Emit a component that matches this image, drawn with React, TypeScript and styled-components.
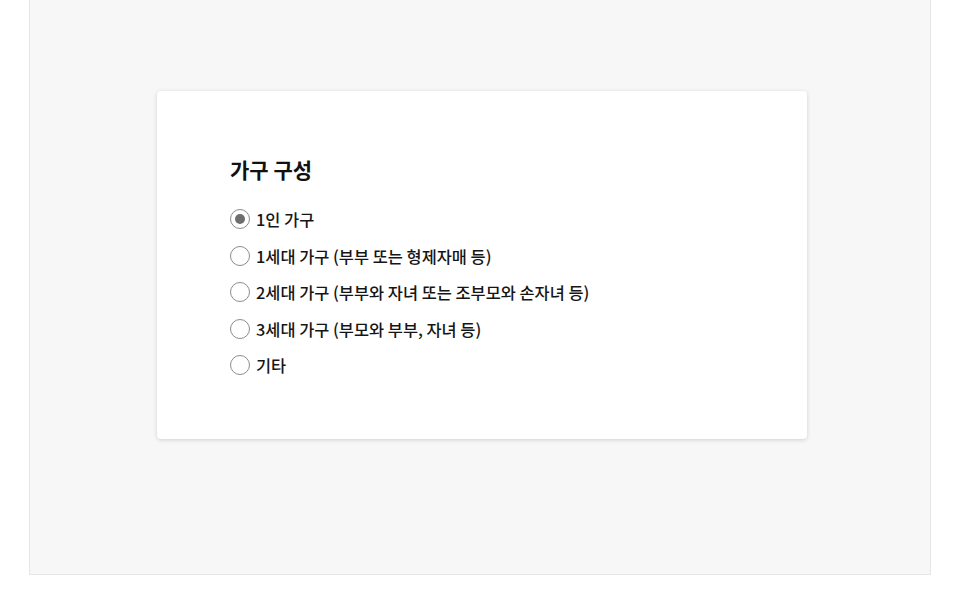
import React, { useState } from 'react';
import styled, { createGlobalStyle } from 'styled-components';

const GlobalStyle = createGlobalStyle`
  html, body {
    margin: 0;
    padding: 0;
    background: #ffffff;
  }
  body {
    font-family: "Noto Sans CJK KR", "Noto Sans", sans-serif;
    color: #111111;
  }
`;

const OPTIONS = [
  '1인 가구',
  '1세대 가구 (부부 또는 형제자매 등)',
  '2세대 가구 (부부와 자녀 또는 조부모와 손자녀 등)',
  '3세대 가구 (부모와 부부, 자녀 등)',
  '기타',
];

const Page = styled.div`
  padding: 0 33px 31px 29px;
`;

const Panel = styled.div`
  box-sizing: border-box;
  height: 575px;
  background: #f7f7f7;
  border: 1px solid #e6e6e6;
  border-top: none;
  padding: 91px 0 0 127px;
`;

const Card = styled.section`
  box-sizing: border-box;
  width: 650px;
  height: 348px;
  background: #ffffff;
  border-radius: 4px;
  box-shadow: 0 1px 4px rgba(0, 0, 0, 0.16);
  padding: 63px 73px 62px;
`;

const Title = styled.h2`
  margin: 0;
  font-size: 21px;
  line-height: 30px;
  font-weight: 700;
`;

const OptionList = styled.div`
  display: flex;
  flex-direction: column;
  gap: 12.5px;
  margin-top: 23px;
`;

const OptionRow = styled.label`
  display: flex;
  align-items: center;
  gap: 6px;
  height: 24px;
  font-size: 16.4px;
  line-height: 24px;
  font-weight: 500;
  color: #151515;
  cursor: pointer;
`;

const HiddenInput = styled.input`
  position: absolute;
  opacity: 0;
  width: 0;
  height: 0;
  margin: 0;
`;

const RadioMark = styled.span<{ $checked: boolean }>`
  box-sizing: border-box;
  width: 20px;
  height: 20px;
  border-radius: 50%;
  border: 1px solid #8c8c8c;
  background: #ffffff;
  display: flex;
  align-items: center;
  justify-content: center;
  flex-shrink: 0;

  &::after {
    content: '';
    width: 10px;
    height: 10px;
    border-radius: 50%;
    background: #6e6e6e;
    display: ${(p) => (p.$checked ? 'block' : 'none')};
  }
`;

export default function App() {
  const [selected, setSelected] = useState(0);

  return (
    <>
      <GlobalStyle />
      <Page>
        <Panel>
          <Card>
            <Title>가구 구성</Title>
            <OptionList>
              {OPTIONS.map((label, i) => (
                <OptionRow key={label}>
                  <HiddenInput
                    type="radio"
                    name="household"
                    checked={selected === i}
                    onChange={() => setSelected(i)}
                  />
                  <RadioMark $checked={selected === i} />
                  {label}
                </OptionRow>
              ))}
            </OptionList>
          </Card>
        </Panel>
      </Page>
    </>
  );
}
